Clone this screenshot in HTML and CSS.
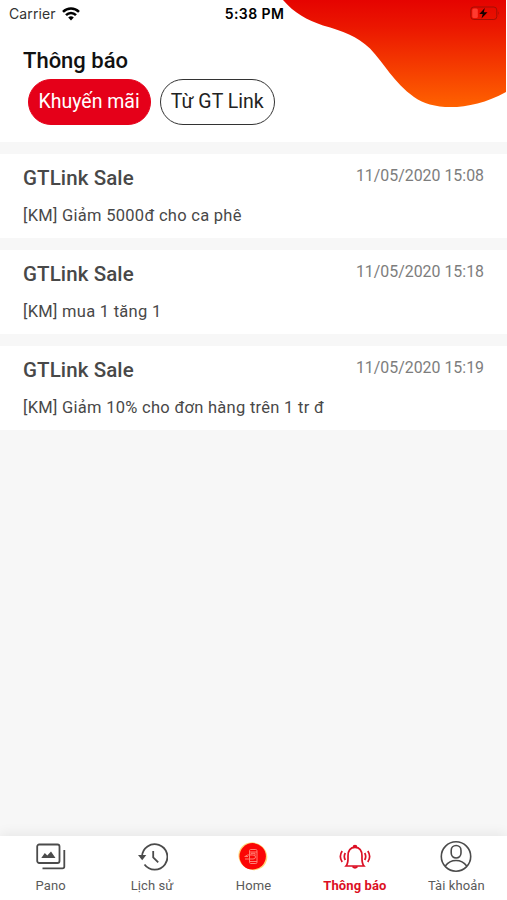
FILE: index.html
```html
<!DOCTYPE html>
<html lang="vi">
<head>
  <meta charset="UTF-8" />
  <meta name="viewport" content="width=device-width, initial-scale=1.0"/>
  <title>Thông báo</title>
  <link rel="stylesheet" href="styles.css">
</head>
<body>
  <div class="app">
    <header class="header">
      <svg class="blob" width="507" height="110" viewBox="0 0 507 110">
        <defs>
          <linearGradient id="blobFill" x1="0" y1="0" x2="0" y2="1">
            <stop offset="0" stop-color="#e50300"/>
            <stop offset="0.25" stop-color="#eb1600"/>
            <stop offset="1" stop-color="#ff6200"/>
          </linearGradient>
        </defs>
        <path fill="url(#blobFill)" d="M283 0C294 13 307 20 323 25.500C343 31 357 36 370 48.500C384 63 394 83 414 97C432 110.500 470 112 506 92V0Z"/>
      </svg>

      <div class="status-bar">
        <div class="carrier">
          <span>Carrier</span>
          <svg width="18" height="14" viewBox="0 0 18 14" fill="none" stroke="#000" stroke-width="2.500">
            <path d="M1 4.800C5.500 0.400 12.500 0.400 17 4.800"/>
            <path d="M4 8.200C6.800 5.300 11.200 5.300 14 8.200"/>
            <path d="M6.200 10.600Q9 8.100 11.800 10.600L9 13.600Z" fill="#000" stroke="none"/>
          </svg>
        </div>
        <div class="clock">5:38 PM</div>
        <svg class="battery" width="30" height="15" viewBox="0 0 30 15">
          <rect x="0.800" y="1" width="26" height="12.500" rx="3" fill="none" stroke="#a30f05" stroke-width="1"/>
          <rect x="2.300" y="2.500" width="5.500" height="9.500" rx="1.500" fill="#ff3b30"/>
          <path d="M28.300 5.300Q30 7.300 28.300 9.300Z" fill="#a30f05"/>
          <path d="M14.800 2L9.300 8H12.700L11.500 12.500L17.500 6.300H13.800Z" fill="#160000"/>
        </svg>
      </div>

      <h1>Thông báo</h1>
      <div class="filters">
        <button class="filter active">Khuyến mãi</button>
        <button class="filter">Từ GT Link</button>
      </div>
    </header>

    <main class="list">
      <div class="item">
        <div class="item-top">
          <h2>GTLink Sale</h2>
          <span class="time">11/05/2020 15:08</span>
        </div>
        <p>[KM] Giảm 5000đ cho ca phê</p>
      </div>
      <div class="item">
        <div class="item-top">
          <h2>GTLink Sale</h2>
          <span class="time">11/05/2020 15:18</span>
        </div>
        <p>[KM] mua 1 tăng 1</p>
      </div>
      <div class="item">
        <div class="item-top">
          <h2>GTLink Sale</h2>
          <span class="time">11/05/2020 15:19</span>
        </div>
        <p>[KM] Giảm 10% cho đơn hàng trên 1 tr đ</p>
      </div>
    </main>

    <nav class="tab-bar">
      <div class="tab">
        <svg width="32" height="32" viewBox="0 0 32 32" fill="none" stroke="#4b4b4b" stroke-width="1.800">
          <rect x="2.200" y="4.500" width="22.300" height="18.500" rx="2"/>
          <path d="M29.300 10V26.500Q29.300 28.300 27.500 28.300H7.500"/>
          <path d="M6.300 18L9.800 13L12.300 15.500L16 11.500L20.500 18Z" fill="#4b4b4b" stroke="none"/>
        </svg>
        <span>Pano</span>
      </div>
      <div class="tab">
        <svg width="32" height="32" viewBox="0 0 32 32" fill="none" stroke="#4b4b4b" stroke-width="1.800">
          <path d="M6 16.500A12.700 12.700 0 1 1 8.500 24.500"/>
          <path d="M2 15H10.300L6.200 20.300Z" fill="#4b4b4b" stroke="none"/>
          <path d="M17.200 11V17.300L22.200 22.300"/>
        </svg>
        <span>Lịch sử</span>
      </div>
      <div class="tab">
        <svg width="32" height="32" viewBox="0 0 32 32" fill="none">
          <ellipse cx="16" cy="16.300" rx="14.700" ry="13.600" fill="#ffd77a" transform="rotate(30 16 16)"/>
          <circle cx="15.700" cy="16.300" r="13.200" fill="#fb0505"/>
          <g stroke="#ff8175" stroke-width="1">
            <rect x="12.500" y="9.500" width="7.500" height="14" rx="1.200"/>
            <path d="M12.500 12H20M12.500 21.500H20M7.500 16.500H11M8 19H16Q18.500 19 18.500 17T16 15H10.500L8 16.500M14 14.500V13.300H18V15.500"/>
          </g>
        </svg>
        <span>Home</span>
      </div>
      <div class="tab active">
        <svg width="32" height="32" viewBox="0 0 32 32" fill="none" stroke="#dc0f24" stroke-width="1.700">
          <path d="M7 26C9.500 23 9 20.500 9 16C9 10.500 11.500 7.300 16 7.300S23 10.500 23 16C23 20.500 22.500 23 25 26Z"/>
          <path d="M14.500 7Q14.500 5.500 16 5.500T17.500 7M13.500 26.500Q16 29 18.500 26.500" fill="#dc0f24"/>
          <path d="M6.300 13Q4.300 16.500 6.300 20M3.200 11Q-0.500 16.500 3.200 22M25.700 13Q27.700 16.500 25.700 20M28.800 11Q32.500 16.500 28.800 22"/>
        </svg>
        <span>Thông báo</span>
      </div>
      <div class="tab">
        <svg width="32" height="32" viewBox="0 0 32 32" fill="none" stroke="#4b4b4b" stroke-width="1.600">
          <circle cx="16" cy="16.500" r="14.700"/>
          <rect x="11.200" y="5.500" width="9.800" height="12.500" rx="4.900"/>
          <path d="M5.300 26C8 22.300 11.500 20.500 16 20.500S24 22.300 26.700 26"/>
        </svg>
        <span>Tài khoản</span>
      </div>
    </nav>
  </div>
</body>
</html>
```
FILE: styles.css
```css
html, body {
  margin: 0;
  padding: 0;
  height: 100%;
  font-family: Roboto, sans-serif;
  background: #f7f7f7;
  color: #484848;
  overflow: hidden;
}

.app {
  display: flex;
  flex-direction: column;
  height: 100%;
}

.header {
  position: relative;
  height: 142px;
  background: #fff;
}

.blob {
  position: absolute;
  top: 0;
  right: 0;
}

.status-bar {
  position: relative;
  display: grid;
  grid-template-columns: 1fr auto 1fr;
  align-items: center;
  height: 27px;
  padding: 0 7px 0 9px;
  font-family: Inter, sans-serif;
  font-size: 14px;
  color: #000;
}

.carrier {
  display: flex;
  align-items: center;
  gap: 6px;
  color: #333;
  letter-spacing: 0.1px;
}

.clock {
  font-weight: 600;
  letter-spacing: 0.4px;
}

.battery {
  justify-self: end;
}

h1 {
  margin: 21px 0 0 23px;
  font-size: 22px;
  line-height: 26px;
  font-weight: 500;
  color: #111;
}

.filters {
  display: flex;
  gap: 9px;
  margin: 5px 0 0 27.5px;
}

.filter {
  height: 45.5px;
  padding: 0 10px;
  border: 1.5px solid #333;
  border-radius: 23px;
  background: #fff;
  font-family: inherit;
  font-size: 19.5px;
  color: #222;
}

.filter.active {
  border-color: #e50019;
  background: #e50019;
  color: #fff;
}

.list {
  flex: 1;
  display: flex;
  flex-direction: column;
  gap: 12px;
  padding-top: 12px;
}

.item {
  box-sizing: border-box;
  height: 84px;
  padding: 12px 23px 0;
  background: #fff;
}

.item-top {
  display: flex;
  justify-content: space-between;
}

.item h2 {
  margin: 0;
  font-size: 20.5px;
  line-height: 25px;
  font-weight: 500;
  letter-spacing: 0.1px;
}

.time {
  font-size: 15.9px;
  line-height: 20px;
  color: #7d7d7d;
}

.item p {
  margin: 14px 0 0;
  font-size: 16.5px;
  line-height: 21px;
  letter-spacing: 0.28px;
}

.tab-bar {
  display: grid;
  grid-template-columns: repeat(5, 1fr);
  height: 64px;
  background: #fff;
  box-shadow: 0 -2px 12px rgba(0, 0, 0, 0.07);
}

.tab {
  display: flex;
  flex-direction: column;
  align-items: center;
  gap: 5px;
  padding-top: 4px;
  font-size: 13px;
  line-height: 18px;
  letter-spacing: 0.1px;
  color: #5a5a5a;
}

.tab.active {
  color: #dc0f24;
  font-weight: 700;
}
```
